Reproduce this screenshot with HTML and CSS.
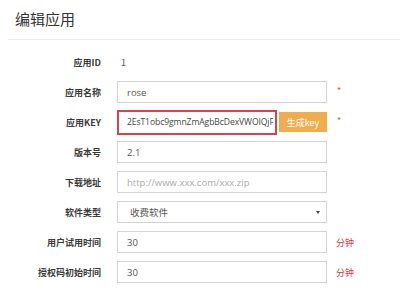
FILE: index.html
```html
<!DOCTYPE html>
<html>
<head>
<meta charset="utf-8">
<link rel="stylesheet" href="styles.css">
</head>
<body>
<div class="page">
  <div class="header"><h1 class="title">编辑应用</h1></div>
  <div class="form">
    <div class="row">
      <div class="label">应用ID</div>
      <div class="field"><span class="static">1</span></div>
    </div>
    <div class="row">
      <div class="label">应用名称</div>
      <div class="field"><div class="input">rose</div><span class="req">*</span></div>
    </div>
    <div class="row">
      <div class="label">应用KEY</div>
      <div class="field">
        <div class="keybox"><div class="input keyinput"><span class="keytext">2EsT1obc9gmnZmAgbBcDexVWOIQjPx</span></div></div>
        <button class="btn">生成key</button>
        <span class="req">*</span>
      </div>
    </div>
    <div class="row">
      <div class="label">版本号</div>
      <div class="field"><div class="input">2.1</div></div>
    </div>
    <div class="row">
      <div class="label">下载地址</div>
      <div class="field"><div class="input placeholder">http://www.xxx.com/xxx.zip</div></div>
    </div>
    <div class="row">
      <div class="label">软件类型</div>
      <div class="field"><div class="input select"><span>收费软件</span><span class="caret"></span></div></div>
    </div>
    <div class="row">
      <div class="label">用户试用时间</div>
      <div class="field"><div class="input">30</div><span class="unit">分钟</span></div>
    </div>
    <div class="row">
      <div class="label">授权码初始时间</div>
      <div class="field"><div class="input">30</div><span class="unit">分钟</span></div>
    </div>
  </div>
</div>
</body>
</html>
```
FILE: styles.css
```css
* { box-sizing: border-box; }
html, body { margin: 0; padding: 0; background: #fff; }
body {
  font-family: "Noto Sans CJK SC", "Noto Sans", "Liberation Sans", sans-serif;
  color: #333;
  width: 400px;
  height: 293px;
  overflow: hidden;
}
.header {
  margin-left: 8px;
  height: 40px;
  border-bottom: 1px solid #ececec;
  display: flex;
  align-items: center;
}
.title {
  margin: 0 0 2px 7px;
  font-size: 15px;
  font-weight: normal;
  color: #333;
  line-height: 1;
}
.form {
  padding-top: 7px;
  display: flex;
  flex-direction: column;
}
.row {
  height: 30px;
  display: flex;
  align-items: center;
}
.label {
  width: 102px;
  text-align: right;
  font-size: 9px;
  font-weight: bold;
  color: #3a3a3a;
  padding-right: 1px;
}
.field {
  margin-left: 15px;
  display: flex;
  align-items: center;
}
.static {
  font-size: 9px;
  color: #555;
  padding-left: 4px;
}
.input {
  width: 210px;
  height: 22px;
  border: 1px solid #d2d2d2;
  background: #fff;
  font-size: 9.5px;
  color: #555;
  padding-left: 9px;
  display: flex;
  align-items: center;
  white-space: nowrap;
  overflow: hidden;
  font-family: "Open Sans", "Noto Sans CJK SC", sans-serif;
}
.placeholder { color: #aaa; }
.select { justify-content: space-between; padding-right: 6px; padding-left: 12px; }
.caret {
  width: 0; height: 0;
  border-left: 2.5px solid transparent;
  border-right: 2.5px solid transparent;
  border-top: 3px solid #444;
}
.keybox {
  border: 2px solid #d9424f;
  width: 160px;
  height: 25px;
  display: flex;
}
.keyinput {
  width: 100%;
  height: 100%;
  border: none;
  padding-left: 8px;
  padding-right: 2px;
  color: #444;
}
.keytext {
  display: block;
  width: 100%;
  overflow: hidden;
  font-size: 8.6px;
  letter-spacing: -0.1px;
}
.btn {
  margin-left: 2px;
  width: 48px;
  height: 20px;
  border: none;
  background: #f0ad4e;
  color: #fff;
  font-size: 9px;
  font-family: "Noto Sans CJK SC", sans-serif;
  padding: 0;
}
.req {
  color: #d9534f;
  font-size: 9px;
  margin-left: 10px;
  margin-top: -3px;
}
.unit {
  color: #d9363e;
  font-size: 9px;
  margin-left: 9px;
}
```
